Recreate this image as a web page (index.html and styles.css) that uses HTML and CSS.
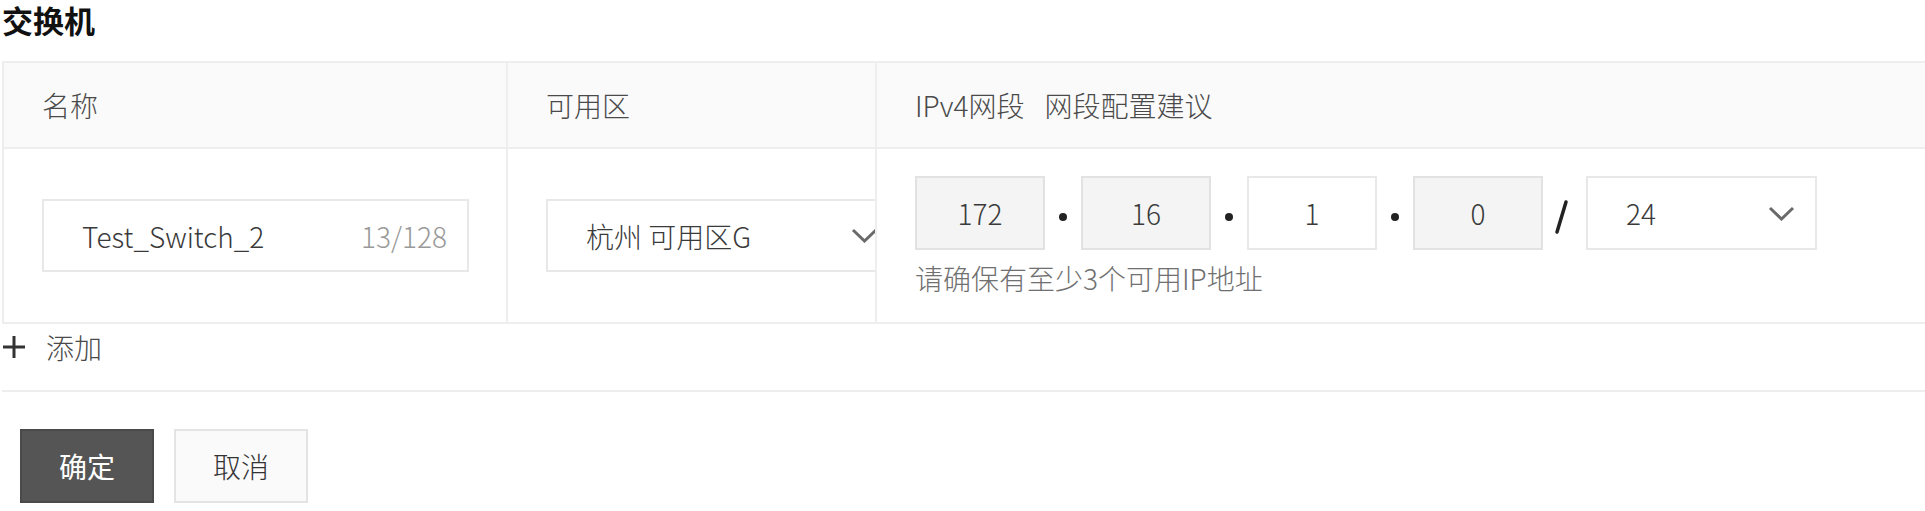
FILE: index.html
```html
<!DOCTYPE html>
<html lang="zh-CN">

<head>
    <meta charset="UTF-8">
    <meta name="viewport" content="width=device-width, initial-scale=1.0">
    <title>交换机</title>
    <link rel="stylesheet" href="styles.css">
</head>

<body>
    <h2 class="section-title">交换机</h2>

    <div class="switch-table">
        <div class="cell head">名称</div>
        <div class="cell head">可用区</div>
        <div class="cell head last">
            <span>IPv4网段</span>
            <span class="tip-link">网段配置建议</span>
        </div>

        <div class="cell">
            <div class="text-input">
                <span class="value">Test_Switch_2</span>
                <span class="counter">13/128</span>
            </div>
        </div>
        <div class="cell">
            <div class="select zone-select">
                <span class="value">杭州 可用区G</span>
                <svg class="chevron" viewBox="0 0 27 15" width="27" height="15">
                    <polyline points="2,2 13.5,13 25,2" />
                </svg>
            </div>
        </div>
        <div class="cell last">
            <div class="cidr">
                <div class="ip-row">
                    <div class="ip-box disabled">172</div>
                    <span class="ip-dot"></span>
                    <div class="ip-box disabled">16</div>
                    <span class="ip-dot"></span>
                    <div class="ip-box">1</div>
                    <span class="ip-dot"></span>
                    <div class="ip-box disabled">0</div>
                    <svg class="ip-slash" viewBox="0 0 43 74" width="43" height="74">
                        <line x1="23" y1="26" x2="14" y2="56" />
                    </svg>
                    <div class="select mask-select">
                        <span class="value">24</span>
                        <svg class="chevron" viewBox="0 0 27 15" width="27" height="15">
                            <polyline points="2,2 13.5,13 25,2" />
                        </svg>
                    </div>
                </div>
                <div class="hint">请确保有至少3个可用IP地址</div>
            </div>
        </div>
    </div>

    <div class="add-row">
        <svg class="plus" viewBox="0 0 24 24" width="24" height="24">
            <line x1="12" y1="1" x2="12" y2="23" />
            <line x1="1" y1="12" x2="23" y2="12" />
        </svg>
        <span>添加</span>
    </div>

    <div class="footer">
        <button class="btn primary">确定</button>
        <button class="btn">取消</button>
    </div>
</body>

</html>
```

FILE: styles.css
```css
body {
    margin: 0;
    padding: 0 0 0 2px;
    overflow: hidden;
    font-family: "Noto Sans CJK SC", "Noto Sans", sans-serif;
    font-size: 28px;
    font-weight: 300;
    color: #3a3a3a;
    background: #fff;
}

.section-title {
    margin: 0 0 21px;
    font-size: 31px;
    line-height: 40px;
    font-weight: 700;
    color: #111;
}

/* tabela dos switches */
.switch-table {
    display: grid;
    grid-template-columns: 504px 369px 1fr;
    grid-template-rows: 86px 175px;
    border-top: 2px solid #eeeeee;
    border-left: 2px solid #eeeeee;
}

.cell {
    display: flex;
    align-items: center;
    padding-left: 38px;
    border-right: 2px solid #eeeeee;
    border-bottom: 2px solid #eeeeee;
    overflow: hidden; /* o select do meio passa da coluna */
    min-width: 0;
}

.cell.last {
    border-right: none;
}

.head {
    background: #fafafa;
    color: #4a4a4a;
}

.tip-link {
    margin-left: 20px;
}

.text-input,
.select {
    box-sizing: border-box;
    display: flex;
    align-items: center;
    flex: 0 0 auto;
    height: 73px;
    border: 2px solid #e8e8e8;
    background: #fff;
}

.text-input {
    width: 427px;
    padding: 0 20px 0 38px;
    justify-content: space-between;
}

.counter {
    color: #999;
}

.select {
    justify-content: space-between;
    padding: 0 20px 0 38px;
}

.zone-select {
    width: 354px;
}

.mask-select {
    width: 231px;
    height: 74px;
}

.chevron polyline {
    fill: none;
    stroke: #6a6a6a;
    stroke-width: 3;
}

.cidr {
    display: flex;
    flex-direction: column;
    margin-top: 3px;
}

.ip-row {
    display: flex;
    align-items: center;
}

.ip-box {
    box-sizing: border-box;
    width: 130px;
    height: 74px;
    display: flex;
    align-items: center;
    justify-content: center;
    border: 2px solid #e8e8e8;
    background: #fff;
}

.ip-box.disabled {
    background: #f4f4f4;
    border-color: #e2e2e2;
}

.ip-dot {
    width: 36px;
    display: flex;
    justify-content: center;
    margin-top: 8px;
}

.ip-dot::before {
    content: '';
    width: 8px;
    height: 8px;
    border-radius: 50%;
    background: #222;
}

.ip-slash line {
    stroke: #222;
    stroke-width: 3.5;
    stroke-linecap: round;
}

.hint {
    margin-top: 8px;
    line-height: 40px;
    color: #707070;
}

.add-row {
    display: flex;
    align-items: center;
    height: 46px;
    margin-bottom: 20px;
    color: #4a4a4a;
}

.plus {
    margin-right: 20px;
}

.plus line {
    stroke: #333;
    stroke-width: 3;
}

.footer {
    border-top: 2px solid #eeeeee;
    padding: 37px 0 0 18px;
    display: flex;
    gap: 20px;
}

.btn {
    width: 134px;
    height: 74px;
    font-family: inherit;
    font-size: 28px;
    font-weight: 300;
    color: #333;
    background: #fafafa;
    border: 2px solid #e4e4e4;
    cursor: pointer;
}

.btn.primary {
    background: #555;
    border-color: #4a4a4a;
    color: #fff;
    font-weight: 400;
}
```
